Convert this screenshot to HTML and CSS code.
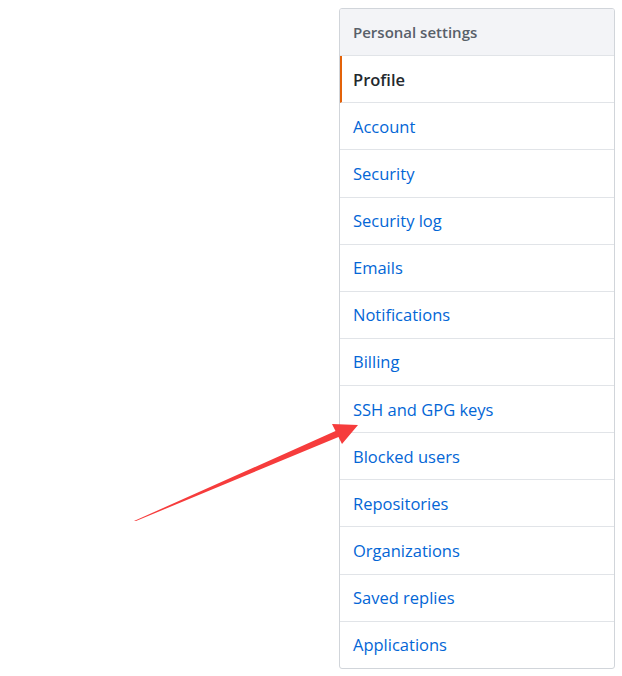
FILE: index.html
```html
<!DOCTYPE html>
<html>
<head>
<meta charset="utf-8">
<link rel="stylesheet" href="styles.css">
</head>
<body>
<div class="page">
  <nav class="menu">
    <div class="menu-heading">Personal settings</div>
    <a class="menu-item selected" href="#">Profile</a>
    <a class="menu-item" href="#">Account</a>
    <a class="menu-item" href="#">Security</a>
    <a class="menu-item" href="#">Security log</a>
    <a class="menu-item" href="#">Emails</a>
    <a class="menu-item" href="#">Notifications</a>
    <a class="menu-item" href="#">Billing</a>
    <a class="menu-item" href="#">SSH and GPG keys</a>
    <a class="menu-item" href="#">Blocked users</a>
    <a class="menu-item" href="#">Repositories</a>
    <a class="menu-item" href="#">Organizations</a>
    <a class="menu-item" href="#">Saved replies</a>
    <a class="menu-item" href="#">Applications</a>
  </nav>
  <svg class="arrow" width="622" height="676" viewBox="0 0 622 676">
    <polygon points="134,521 335.5,431 332,424 358,425 342,444 338.5,437 136,521" fill="#f63c3c"/>
  </svg>
</div>
</body>
</html>
```
FILE: styles.css
```css
html, body {
  margin: 0;
  padding: 0;
  background: #ffffff;
}
.page {
  position: relative;
  width: 622px;
  height: 676px;
  padding-top: 8px;
  box-sizing: border-box;
  font-family: "Open Sans", "Noto Sans", sans-serif;
}
.menu {
  margin-left: 339px;
  width: 276px;
  box-sizing: border-box;
  border: 1px solid #d1d5da;
  border-radius: 3px;
  display: flex;
  flex-direction: column;
  overflow: hidden;
}
.menu-heading {
  height: 47.14px;
  box-sizing: border-box;
  border-bottom: 1px solid #e1e4e8;
  background: #f3f4f7;
  color: #586069;
  font-size: 15px;
  font-weight: 600;
  padding: 0 13px;
  display: flex;
  align-items: center;
}
.menu-item {
  height: 47.14px;
  box-sizing: border-box;
  border-bottom: 1px solid #e1e4e8;
  padding: 0 13px;
  display: flex;
  align-items: center;
  color: #0366d6;
  font-size: 16.5px;
  text-decoration: none;
}
.menu-item:last-child {
  border-bottom: none;
  height: 46.14px;
}
.menu-item.selected {
  color: #24292e;
  font-weight: 600;
  border-left: 2px solid #e36209;
  padding-left: 11px;
}
.arrow {
  position: absolute;
  left: 0;
  top: 0;
  pointer-events: none;
}
```
